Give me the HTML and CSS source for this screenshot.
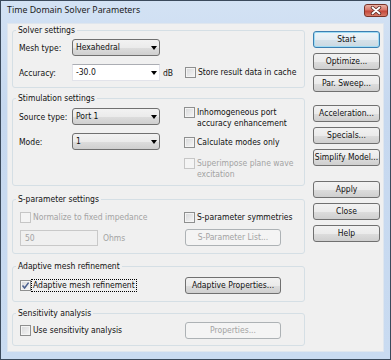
FILE: index.html
```html
<!DOCTYPE html>
<html lang="en">
<head>
  <meta charset="UTF-8" />
  <title>Time Domain Solver Parameters</title>
  <link rel="stylesheet" href="styles.css">
</head>
<body>
  <div class="window">
    <div class="titlebar">
      <span class="title">Time Domain Solver Parameters</span>
      <span class="close-btn">
        <svg width="12" height="9" viewBox="0 0 12 9">
          <path d="M2.5 1.5 L9.5 7.5 M9.5 1.5 L2.5 7.5" stroke="#5a2a24" stroke-width="3.4" stroke-linecap="round"/>
          <path d="M2.5 1.5 L9.5 7.5 M9.5 1.5 L2.5 7.5" stroke="#ffffff" stroke-width="1.8" stroke-linecap="round"/>
        </svg>
      </span>
    </div>

    <div class="client">
      <div class="groups">
        <!-- Solver settings -->
        <fieldset class="group g-solver">
          <legend>Solver settings</legend>
          <div class="row">
            <span class="label">Mesh type:</span>
            <div class="select">Hexahedral<span class="arrow"></span></div>
          </div>
          <div class="row row-gap">
            <span class="label">Accuracy:</span>
            <div class="combo">-30.0<span class="arrow"></span></div>
            <span class="unit">dB</span>
            <label class="check"><span class="box"></span>Store result data in cache</label>
          </div>
        </fieldset>

        <!-- Stimulation settings -->
        <fieldset class="group g-stim">
          <legend>Stimulation settings</legend>
          <div class="cols">
            <div class="col-left">
              <div class="row">
                <span class="label">Source type:</span>
                <div class="select">Port 1<span class="arrow"></span></div>
              </div>
              <div class="row row-gap">
                <span class="label">Mode:</span>
                <div class="select">1<span class="arrow"></span></div>
              </div>
            </div>
            <div class="col-right stim-checks">
              <label class="check multi"><span class="box"></span><span>Inhomogeneous port<br>accuracy enhancement</span></label>
              <label class="check multi calc"><span class="box"></span><span>Calculate modes only</span></label>
              <label class="check multi disabled super"><span class="box"></span><span>Superimpose plane wave<br>excitation</span></label>
            </div>
          </div>
        </fieldset>

        <!-- S-parameter settings -->
        <fieldset class="group g-spar">
          <legend>S-parameter settings</legend>
          <div class="cols">
            <div class="col-left">
              <label class="check disabled line"><span class="box"></span>Normalize to fixed impedance</label>
              <div class="row spar-row">
                <div class="textbox disabled">50</div>
                <span class="unit-ohms">Ohms</span>
              </div>
            </div>
            <div class="col-right">
              <label class="check line"><span class="box"></span>S-parameter symmetries</label>
              <div class="row spar-row">
                <button class="btn wide disabled">S-Parameter List...</button>
              </div>
            </div>
          </div>
        </fieldset>

        <!-- Adaptive mesh refinement -->
        <fieldset class="group g-adapt">
          <legend>Adaptive mesh refinement</legend>
          <div class="cols">
            <div class="col-left row">
              <label class="check checked">
                <span class="box">
                  <svg width="9" height="9" viewBox="0 0 9 9"><path d="M1.5 4.5 L3.6 7 L7.6 1.6" fill="none" stroke="#4a5f8e" stroke-width="1.5"/></svg>
                </span>
                <span class="focus">Adaptive mesh refinement</span>
              </label>
            </div>
            <div class="col-right row">
              <button class="btn wide">Adaptive Properties...</button>
            </div>
          </div>
        </fieldset>

        <!-- Sensitivity analysis -->
        <fieldset class="group g-sens">
          <legend>Sensitivity analysis</legend>
          <div class="cols">
            <div class="col-left row">
              <label class="check"><span class="box"></span>Use sensitivity analysis</label>
            </div>
            <div class="col-right row">
              <button class="btn wide disabled">Properties...</button>
            </div>
          </div>
        </fieldset>
      </div>

      <div class="buttons">
        <div class="btn-group">
          <button class="btn default">Start</button>
          <button class="btn">Optimize...</button>
          <button class="btn">Par. Sweep...</button>
        </div>
        <div class="btn-group mid">
          <button class="btn">Acceleration...</button>
          <button class="btn">Specials...</button>
          <button class="btn">Simplify Model...</button>
        </div>
        <div class="btn-group last">
          <button class="btn">Apply</button>
          <button class="btn">Close</button>
          <button class="btn">Help</button>
        </div>
      </div>
    </div>
  </div>
</body>
</html>
```

FILE: styles.css
```css
* {
  box-sizing: border-box;
  margin: 0;
  padding: 0;
}

body {
  width: 391px;
  height: 360px;
  overflow: hidden;
  background: #ffffff;
  font-family: "DejaVu Sans Condensed", "DejaVu Sans", sans-serif;
  font-size: 8.5px;
  color: #111111;
}

.window {
  width: 391px;
  height: 360px;
  border: 1px solid #3b4a5c;
  background: linear-gradient(#d3e2f4, #c6d8ef 30%, #c9dbf1);
  display: flex;
  flex-direction: column;
}

/* title bar */
.titlebar {
  height: 22px;
  flex-shrink: 0;
  display: flex;
  align-items: flex-start;
  padding: 3px 2px 0 6px;
}

.title {
  font-family: "Noto Sans", sans-serif;
  font-size: 8.8px;
  line-height: 12px;
  color: #1b1b1b;
}

.close-btn {
  margin-left: auto;
  width: 24px;
  height: 13px;
  border: 1px solid #7a3328;
  border-radius: 3px;
  background: linear-gradient(#eab1a4, #d8776a 45%, #c4473a 55%, #d77b68);
  display: flex;
  align-items: center;
  justify-content: center;
}

/* client area */
.client {
  flex: 1;
  margin: 0 6px 7px 6px;
  background: #f0f0f0;
  border: 1px solid #dfe6ee;
  display: flex;
  gap: 8px;
  padding: 1px 3px 0 4px;
}

.groups {
  width: 293px;
  display: flex;
  flex-direction: column;
}

.group {
  border: 1px solid #d5dfe5;
  border-radius: 3px;
  padding: 0 6px;
}

.group legend {
  font-size: 8.5px;
  line-height: 10px;
  padding: 0 2px;
  margin-left: -3px;
}

.g-solver { height: 63px; padding-top: 4px; }
.g-stim { height: 93px; margin-top: 5px; padding-top: 5px; }
.g-spar { height: 60px; margin-top: 8px; padding-top: 8px; }
.g-adapt { height: 41px; margin-top: 7px; padding-top: 6px; }
.g-sens { height: 38px; margin-top: 6px; padding-top: 4px; }

.row {
  display: flex;
  align-items: center;
  height: 17px;
}

.row-gap {
  margin-top: 8px;
}

.label {
  width: 53px;
  flex-shrink: 0;
}

.cols {
  display: flex;
}

.col-left {
  width: 165px;
  flex-shrink: 0;
}

/* drop-down list (button look) */
.select {
  position: relative;
  width: 88px;
  height: 17px;
  line-height: 15px;
  padding-left: 3px;
  border: 1px solid #707070;
  border-radius: 3px;
  background: linear-gradient(#f2f2f2, #ebebeb 50%, #dddddd 51%, #cfcfcf);
}

/* editable combo box */
.combo {
  position: relative;
  width: 88px;
  height: 17px;
  line-height: 15px;
  padding-left: 3px;
  background: #ffffff;
  border: 1px solid #e2e3ea;
  border-top-color: #abadb3;
}

.arrow {
  position: absolute;
  right: 2px;
  top: 6px;
  width: 0;
  height: 0;
  border-left: 3.5px solid transparent;
  border-right: 3.5px solid transparent;
  border-top: 4px solid #000000;
}

.unit {
  width: 25px;
  padding-left: 3px;
  flex-shrink: 0;
}

/* checkboxes */
.check {
  display: flex;
  align-items: center;
  line-height: 11px;
  white-space: nowrap;
}

.check .box {
  width: 11px;
  height: 11px;
  flex-shrink: 0;
  margin-right: 2px;
  border: 1px solid #8e8f8f;
  background: linear-gradient(135deg, #d7d8da, #f6f6f6);
  box-shadow: inset 0 0 0 1px #f4f4f4;
  display: flex;
  align-items: center;
  justify-content: center;
}

.check.multi {
  align-items: flex-start;
}

.check.disabled {
  color: #a3a3a3;
}

.check.disabled .box {
  border-color: #c6c6c6;
  background: #f4f4f4;
  box-shadow: none;
}

.stim-checks {
  margin-top: -1px;
}

.calc { margin-top: 8px; }
.super { margin-top: 10px; }

.g-spar .col-left .check { margin-left: 1px; }
.g-adapt .col-left .check,
.g-sens .col-left .check { margin-left: 1px; }

.spar-row {
  margin-top: 6px;
}

.textbox {
  width: 78px;
  height: 16px;
  margin-left: 1px;
  line-height: 14px;
  padding-left: 4px;
  border: 1px solid #c9c9c9;
  background: #f0f0f0;
}

.textbox.disabled {
  color: #a3a3a3;
}

.unit-ohms {
  margin-left: 5px;
  color: #a3a3a3;
}

.check.checked .box {
  margin-right: 0;
}

.focus {
  border: 1px dotted #000000;
  padding: 0 1px;
  line-height: 11px;
}

/* push buttons */
.btn {
  display: block;
  height: 17px;
  width: 67px;
  font-family: inherit;
  font-size: 8.5px;
  line-height: 15px;
  color: #111111;
  text-align: center;
  white-space: nowrap;
  border: 1px solid #707070;
  border-radius: 3px;
  background: linear-gradient(#f2f2f2, #ebebeb 50%, #dddddd 51%, #cfcfcf);
}

.btn.wide {
  width: 96px;
  margin-left: 1px;
}

.btn.disabled {
  color: #a3a3a3;
  border-color: #adb2b5;
  background: #f4f4f4;
}

.btn.default {
  border-color: #3c7fb1;
  box-shadow: inset 0 0 0 1px #9fdcf4;
  background: linear-gradient(#eef5f9, #e4edf3 50%, #d6e2ea 51%, #cbd8e1);
}

.buttons {
  width: 67px;
  padding-top: 6px;
  display: flex;
  flex-direction: column;
}

.btn-group {
  display: flex;
  flex-direction: column;
  gap: 5px;
}

.btn-group.mid { margin-top: 13px; }
.btn-group.last { margin-top: 15px; }
```
